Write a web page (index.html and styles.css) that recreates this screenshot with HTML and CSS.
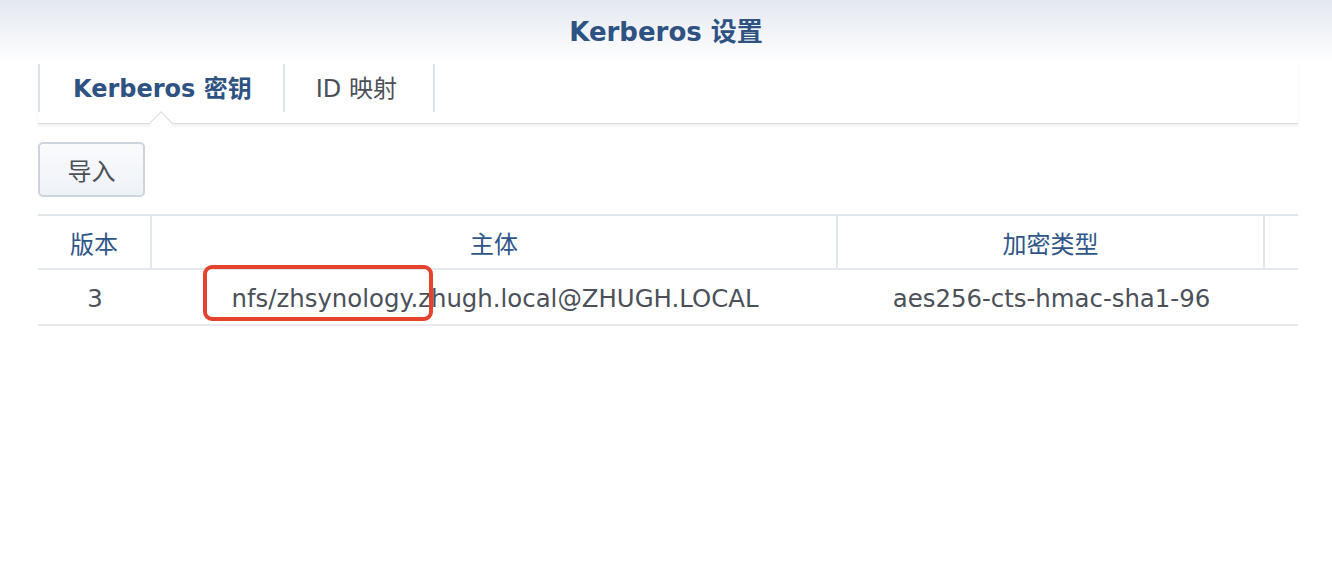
FILE: index.html
```html
<!DOCTYPE html>
<html lang="zh-CN">
<head>
<meta charset="utf-8">
<title>Kerberos 设置</title>
<link rel="stylesheet" href="styles.css">
</head>
<body>
<div class="window">
  <header class="titlebar"><h1 class="title">Kerberos 设置</h1></header>
  <main class="content">
    <nav class="tabs">
      <div class="tab active">Kerberos 密钥</div>
      <div class="tab second">ID 映射</div>
    </nav>
    <div class="toolbar">
      <button class="btn">导入</button>
    </div>
    <div class="grid">
      <div class="row head">
        <div class="cell c1">版本</div>
        <div class="cell c2">主体</div>
        <div class="cell c3">加密类型</div>
        <div class="cell c4"></div>
      </div>
      <div class="row body">
        <div class="cell c1">3</div>
        <div class="cell c2">nfs/zhsynology.zhugh.local@ZHUGH.LOCAL</div>
        <div class="cell c3">aes256-cts-hmac-sha1-96</div>
        <div class="cell c4"></div>
      </div>
      <div class="highlight"></div>
    </div>
  </main>
</div>
</body>
</html>
```
FILE: styles.css
```css
* { box-sizing: border-box; }
html, body { margin: 0; padding: 0; background: #fff; }
body {
  width: 1332px;
  height: 586px;
  overflow: hidden;
  font-family: "DejaVu Sans", "Noto Sans CJK SC", sans-serif;
  color: #4b5059;
}
.titlebar {
  height: 62px;
  background: linear-gradient(#e3e8f0, #ffffff);
  display: flex;
  align-items: center;
  justify-content: center;
}
.title {
  margin: 0;
  font-size: 26px;
  font-weight: bold;
  color: #2e5282;
  padding-bottom: 3px;
}
.content {
  padding: 2px 34px 0 38px;
}
.tabs {
  display: flex;
  height: 60px;
  border-bottom: 1px solid #d8dce2;
  box-shadow: 0 2px 3px rgba(0,0,0,0.06);
  position: relative;
}
.tab {
  height: 48px;
  display: flex;
  align-items: center;
  padding: 0 31px 3px 33px;
  font-size: 24px;
  color: #4b5059;
  border-right: 2px solid #dde3ea;
  position: relative;
}
.tab.second { padding: 0 36px 3px 31px; }
.tab:first-child { border-left: 2px solid #dde3ea; }
.tab.active {
  font-weight: bold;
  color: #2e5282;
}
.tab.active::after {
  content: "";
  position: absolute;
  left: 50%;
  bottom: -21px;
  width: 17px;
  height: 17px;
  margin-left: -9px;
  background: #fff;
  border-top: 1px solid #d8dce2;
  border-left: 1px solid #d8dce2;
  transform: rotate(45deg);
}
.toolbar {
  padding: 18px 0 17px;
  display: flex;
}
.btn {
  width: 107px;
  height: 55px;
  border: 2px solid #cdd4de;
  border-radius: 5px;
  background: linear-gradient(#fafbfd, #eef2f7);
  font-family: "Noto Sans CJK SC", sans-serif;
  font-size: 24px;
  color: #4b5059;
  padding: 0;
}
.grid {
  position: relative;
  border-top: 2px solid #dfe6ee;
}
.row {
  display: flex;
  border-bottom: 2px solid #e7eaee;
}
.row.head { height: 54px; border-bottom-color: #e4e9ef; }
.row.body { height: 56px; }
.cell {
  display: flex;
  align-items: center;
  justify-content: center;
  font-size: 24.4px;
}
.head .cell {
  color: #2f5689;
  font-family: "Noto Sans CJK SC", sans-serif;
  font-size: 24px;
  border-right: 2px solid #e1e8f0;
}
.head .c4 { border-right: none; }
.c1 { width: 114px; }
.c2 { width: 686px; }
.c3 { width: 427px; }
.c4 { flex: 1; }
.body .cell { padding-top: 2px; }
.highlight {
  position: absolute;
  left: 165px;
  top: 49px;
  width: 230px;
  height: 56px;
  border: 4px solid #e4432e;
  border-radius: 9px;
}
```
